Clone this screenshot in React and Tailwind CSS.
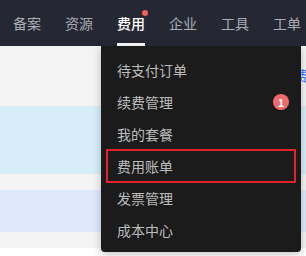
import React from 'react';

const navItems = ['备案', '资源', '费用', '企业', '工具', '工单'];

const menuItems = [
    { label: '待支付订单' },
    { label: '续费管理', badge: 1 },
    { label: '我的套餐' },
    { label: '费用账单', marked: true },
    { label: '发票管理' },
    { label: '成本中心' },
];

const App = () => {
    return (
        <div
            className="relative w-[306px] h-[256px] overflow-hidden bg-white"
            style={{ fontFamily: '"Noto Sans CJK SC", "Noto Sans", sans-serif' }}
        >
            {/* Top nav */}
            <div className="h-[46px] bg-[#252833] flex items-center pl-[13px] gap-[24px]">
                {navItems.map((item) => {
                    const active = item === '费用';
                    return (
                        <div key={item} className="relative h-full flex items-center">
                            <span className={`text-[14px] leading-none ${active ? 'text-white font-medium' : 'text-[#a9acb4]'}`}>
                                {item}
                            </span>
                            {active && (
                                <>
                                    <span className="absolute right-[-3px] top-[10px] w-[6px] h-[6px] rounded-full bg-[#f25f5c]" />
                                    <span className="absolute left-0 right-0 bottom-0 h-[3px] bg-white" />
                                </>
                            )}
                        </div>
                    );
                })}
            </div>

            {/* Page behind */}
            <div className="h-[60px] bg-[#f4f4f4] pt-[22px] pl-[294px] text-[14px] leading-none text-[#3370ff] whitespace-nowrap">
                费用
            </div>
            <div className="h-[68px] bg-[#d7eef8]" />
            <div className="h-[16px] bg-[#f4f4f4]" />
            <div className="h-[42px] bg-[#dde9fb]" />
            <div className="h-[16px] bg-[#f4f4f4]" />

            {/* Dropdown menu */}
            <div className="absolute left-[101px] top-[46px] w-[200px] h-[206px] bg-[#1b1b1c] rounded-b-[4px] shadow-[0_2px_8px_rgba(0,0,0,0.25)] pt-[8px] px-[6px]">
                {menuItems.map((m) => (
                    <div
                        key={m.label}
                        className={`h-[32px] flex items-center justify-between pl-[10px] pr-[6px] ${
                            m.marked ? 'outline-2 outline-[#e3212b] -outline-offset-1' : ''
                        }`}
                    >
                        <span className="text-[14px] leading-none text-[#bdbdbd]">{m.label}</span>
                        {m.badge && (
                            <span className="w-[16px] h-[16px] rounded-full bg-[#f26b6b] text-white text-[11px] font-bold leading-none flex items-center justify-center">
                                {m.badge}
                            </span>
                        )}
                    </div>
                ))}
            </div>
        </div>
    );
};

export default App;
